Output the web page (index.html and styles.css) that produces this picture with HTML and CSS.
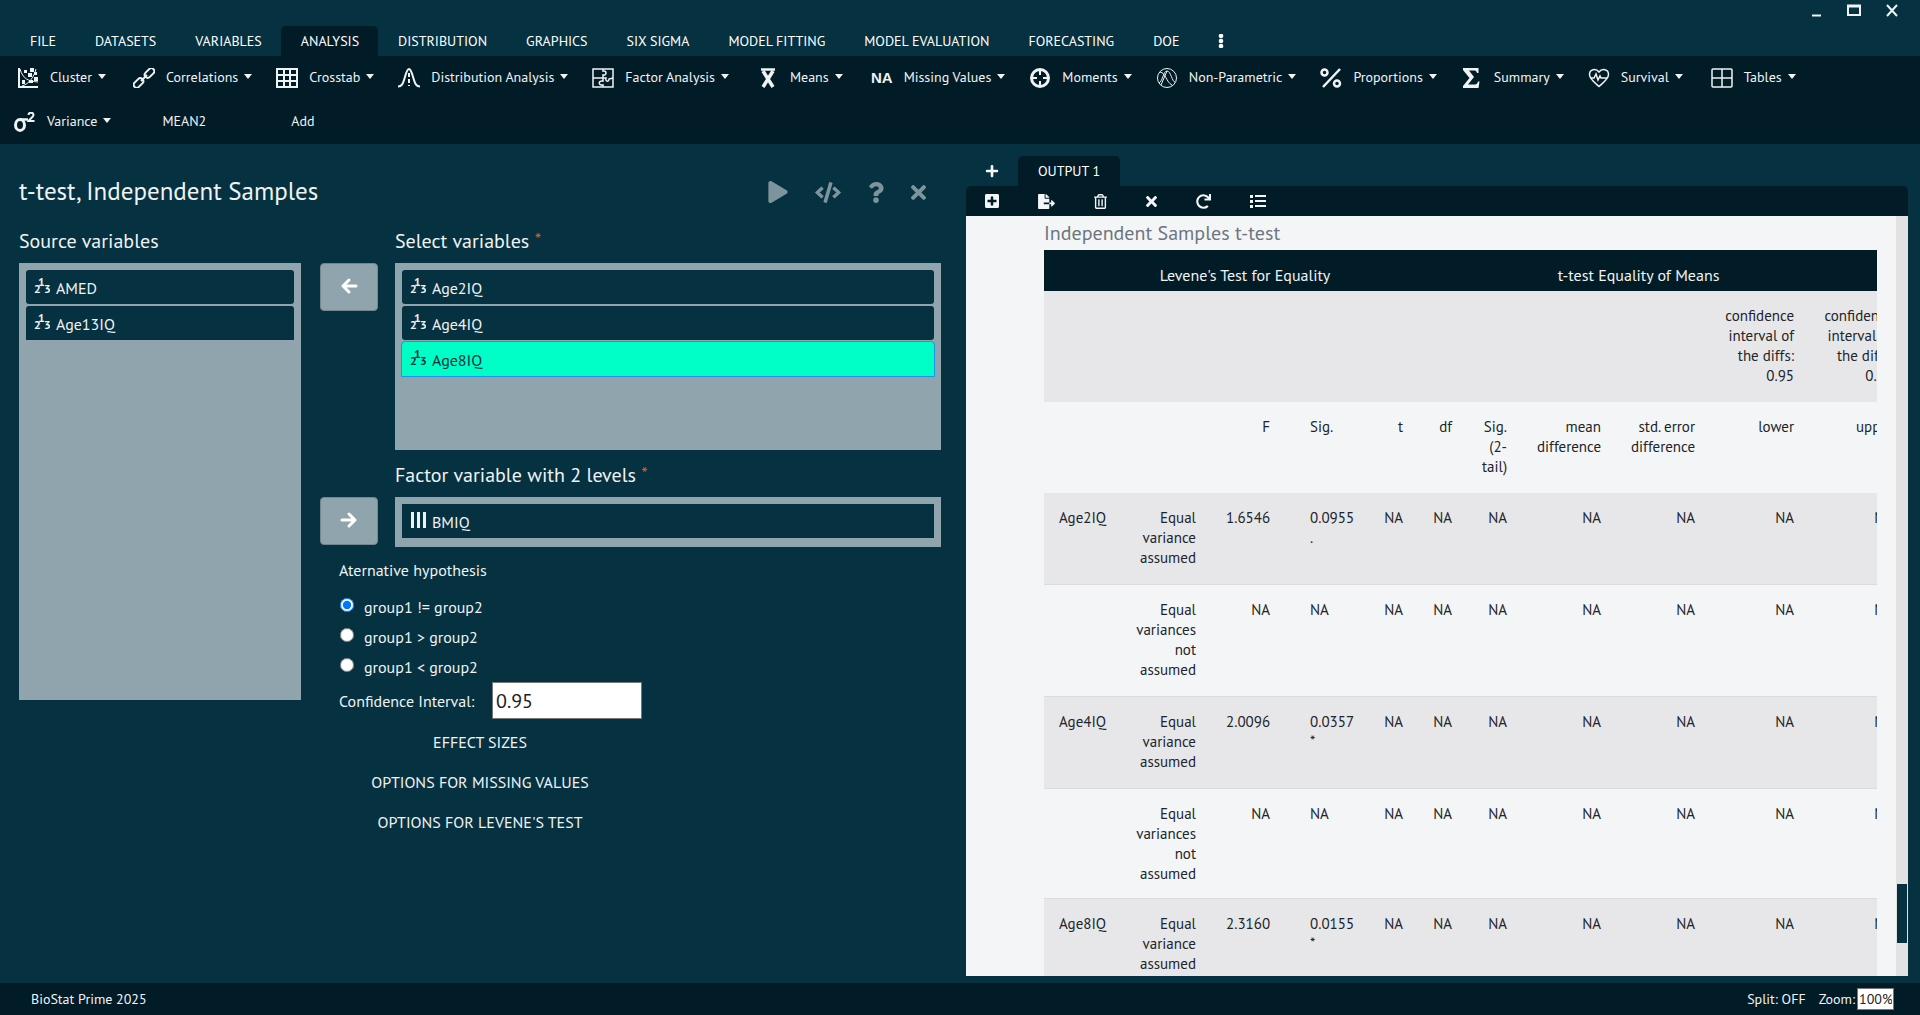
FILE: index.html
```html
<!DOCTYPE html>
<html lang="en">
<head>
<meta charset="utf-8">
<title>BioStat Prime 2025</title>
<link rel="stylesheet" href="styles.css">
</head>
<body>
<svg class="defs" aria-hidden="true">
  <symbol id="numeric" viewBox="0 0 16 18"><text x="0" y="16">2</text><text x="4" y="9">1</text><text x="10" y="16">3</text></symbol>
  <symbol id="times" viewBox="0 80 352 352"><path d="M242.72 256l100.07-100.07c12.28-12.28 12.28-32.19 0-44.48l-22.24-22.24c-12.28-12.28-32.19-12.28-44.48 0L176 189.28 75.93 89.21c-12.28-12.28-32.19-12.28-44.48 0L9.21 111.45c-12.28 12.28-12.28 32.19 0 44.48L109.28 256 9.21 356.07c-12.28 12.28-12.28 32.19 0 44.48l22.24 22.24c12.28 12.28 32.2 12.28 44.48 0L176 322.72l100.07 100.07c12.28 12.28 32.2 12.28 44.48 0l22.24-22.24c12.28-12.28 12.28-32.19 0-44.48L242.72 256z"/></symbol>
</svg>

<header>
  <div class="window-bar">
    <button class="window-btn" aria-label="Minimize"><svg width="14" height="14" viewBox="0 0 14 14"><path d="M3 12.500h9" stroke="currentColor" stroke-width="2"/></svg></button>
    <button class="window-btn" aria-label="Maximize"><svg width="14" height="14" viewBox="0 0 14 14"><path d="M1 3h12v9H1z" fill="none" stroke="currentColor" stroke-width="2"/><path d="M0 3h14" stroke="currentColor" stroke-width="3"/></svg></button>
    <button class="window-btn" aria-label="Close"><svg width="14" height="14" viewBox="0 0 14 14"><path d="M2 2l10 11M12 2L2 13" stroke="currentColor" stroke-width="2"/></svg></button>
  </div>
  <nav class="menu">
    <a href="#">FILE</a><a href="#">DATASETS</a><a href="#">VARIABLES</a><a href="#" class="active">ANALYSIS</a><a href="#">DISTRIBUTION</a><a href="#">GRAPHICS</a><a href="#">SIX SIGMA</a><a href="#">MODEL FITTING</a><a href="#">MODEL EVALUATION</a><a href="#">FORECASTING</a><a href="#">DOE</a><a href="#" aria-label="More"><svg width="6" height="14" viewBox="0 0 6 14" fill="currentColor"><circle cx="3" cy="2" r="2.300"/><circle cx="3" cy="7" r="2.300"/><circle cx="3" cy="12" r="2.300"/></svg></a>
  </nav>
  <div class="ribbon">
    <button class="tool indent"><svg class="tool-icon" viewBox="0 0 22 20"><path d="M2 0v19h19" fill="none" stroke="currentColor" stroke-width="2"/><path d="M3 1c3 10 8 12 18 13M5 18C12 16 17 9 19 1" fill="none" stroke="currentColor"/><g fill="currentColor"><path d="M7 2h3v3H7zM13 0h4v4h-4zM11 5h4v4h-4zM17 4h3v3h-3zM17 9h4v4h-4zM5 12h3v4H5zM12 12h4v3h-4z"/></g></svg><span>Cluster</span></button>
    <button class="tool indent"><svg class="tool-icon" viewBox="0 0 22 20" fill="none" stroke="currentColor" stroke-width="2"><rect x="11" y="2" width="11" height="6" rx="3" transform="rotate(-45 16.500 5)"/><rect x="0" y="12" width="11" height="6" rx="3" transform="rotate(-45 5.500 15)"/><path d="M8 13l6-6"/></svg><span>Correlations</span></button>
    <button class="tool"><svg class="tool-icon" viewBox="0 0 22 20" fill="none" stroke="currentColor" stroke-width="2"><path d="M1 1h20v18H1zM8 1v18M14 1v18M1 7h20M1 13h20"/></svg><span>Crosstab</span></button>
    <button class="tool"><svg class="tool-icon" viewBox="0 0 22 20" fill="none" stroke="currentColor" stroke-width="2"><path d="M0 18.500c4 0 5-3 6.500-8S9 1 11 1s3 4.500 4.500 9.500 2.500 8 6.500 8"/><path d="M11 5v13" stroke-dasharray="4 2"/></svg><span>Distribution Analysis</span></button>
    <button class="tool"><svg class="tool-icon" viewBox="0 0 22 20" fill="none" stroke="currentColor" stroke-width="1.500"><path d="M1 1h20v18H1z"/><path d="M11 1v2c4-1 4 5 0 4v3M1 10h13c-1 4 3 4 3 1l4-1M11 10v3c-5-1-5 5 0 4v2"/></svg><span>Factor Analysis</span></button>
    <button class="tool"><svg class="tool-icon wide" viewBox="0 0 22 20" fill="none" stroke="currentColor"><path d="M4 1.500h14" stroke-width="2.500"/><path d="M6 3l10 16M16 3L6 19" stroke-width="3.500"/></svg><span>Means</span></button>
    <button class="tool"><svg class="tool-icon wide" viewBox="0 0 22 20" fill="currentColor"><text class="na" x="0" y="15">NA</text></svg><span>Missing Values</span></button>
    <button class="tool"><svg class="tool-icon" viewBox="0 0 22 20" fill="none" stroke="currentColor" stroke-width="3"><circle cx="11" cy="10" r="8.500"/><path d="M11 1v6M11 13v6M2 10h6M14 10h6" stroke-width="2"/></svg><span>Moments</span></button>
    <button class="tool"><svg class="tool-icon" viewBox="0 0 22 20" fill="none" stroke="currentColor"><circle cx="11" cy="10" r="9.500"/><path d="M3 15C7 13 7 3 11 3s5 11 8 11M4 4c6 1 6 10 12 13M5 17L11 3"/></svg><span>Non-Parametric</span></button>
    <button class="tool"><svg class="tool-icon" viewBox="0 0 22 20" fill="none" stroke="currentColor" stroke-width="2.500"><circle cx="4.500" cy="4.500" r="3"/><circle cx="17" cy="15.500" r="3"/><path d="M20 1L3 19"/></svg><span>Proportions</span></button>
    <button class="tool"><svg class="tool-icon" viewBox="0 0 22 20" fill="currentColor"><path d="M2 0h15.500v5h-1.500c-.5-2-1.500-2.500-3-2.500H8l5 6.500-6 7.500h7c1.500 0 2.500-1 3-3h1.500L17.500 20H2v-2l6.500-8L2 2z"/></svg><span>Summary</span></button>
    <button class="tool"><svg class="tool-icon" viewBox="0 0 22 20" fill="none" stroke="currentColor" stroke-width="1.500"><path d="M11 18.500C7 15 1.500 11 1.500 6.500 1.500 1 8 0 11 4c3-4 9.500-3 9.500 2.500 0 4.500-5.500 8.500-9.500 12z"/><path d="M3 10h3l2-4 2 6 2-4 1 2h6"/></svg><span>Survival</span></button>
    <button class="tool"><svg class="tool-icon wide" viewBox="0 0 22 20" fill="none" stroke="currentColor" stroke-width="1.500"><rect x="1" y="1" width="20" height="18" rx="1"/><path d="M11 1v18M1 10h20"/></svg><span>Tables</span></button>
    <button class="tool"><svg class="tool-icon" viewBox="0 0 22 20" fill="none" stroke="currentColor"><ellipse cx="6" cy="13" rx="4.500" ry="5.500" stroke-width="3"/><path d="M6 7.500h8" stroke-width="2.500"/><path d="M14.500 3c0-3 5-3 5 0 0 2-3 3-5 6h6" stroke-width="2"/></svg><span>Variance</span></button>
    <button class="tool plain"><b>MEAN2</b></button>
    <button class="tool plain"><b>Add</b></button>
  </div>
</header>

<main>
  <section class="dialog">
    <div class="dialog-head">
      <h1>t-test, Independent Samples</h1>
      <div class="dialog-actions">
        <button aria-label="Run"><svg width="20" height="22" viewBox="0 0 448 512"><path d="M424.400 214.700L72.400 6.600C43.800-10.300 0 6.100 0 47.900V464c0 37.500 40.700 60.100 72.400 41.300l352-208c31.400-18.500 31.500-64.100 0-82.600z"/></svg></button>
        <button aria-label="Show code"><svg width="26" height="21" viewBox="0 0 640 512"><path d="M278.900 511.500l-61-17.700c-6.400-1.800-10-8.500-8.200-14.900L346.200 8.700c1.800-6.400 8.500-10 14.900-8.200l61 17.700c6.400 1.800 10 8.500 8.200 14.900L293.800 503.300c-1.900 6.400-8.500 10.100-14.900 8.200zm-114-112.200l43.500-46.400c4.600-4.900 4.300-12.700-.8-17.200L117 256l90.600-79.700c5.100-4.500 5.500-12.300.8-17.200l-43.500-46.400c-4.500-4.800-12.100-5.100-17-.5L3.800 247.200c-5.100 4.700-5.100 12.800 0 17.500l144.100 135.100c4.900 4.600 12.500 4.400 17-.5zm327.200.6l144.100-135.100c5.100-4.700 5.100-12.800 0-17.500L492.100 112.100c-4.800-4.500-12.400-4.300-17 .5L431.600 159c-4.600 4.900-4.300 12.700.8 17.200L523 256l-90.600 79.700c-5.100 4.500-5.500 12.300-.8 17.200l43.500 46.400c4.500 4.900 12.100 5.100 17 .6z"/></svg></button>
        <button aria-label="Help"><svg width="16" height="21" viewBox="0 0 384 512"><path d="M202.021 0C122.202 0 70.503 32.703 29.914 91.026c-7.363 10.580-5.093 25.086 5.178 32.874l43.138 32.709c10.373 7.865 25.132 6.026 33.253-4.148 25.049-31.381 43.630-49.449 82.757-49.449 30.764 0 68.816 19.799 68.816 49.631 0 22.552-18.617 34.134-48.993 51.164-35.423 19.860-82.299 44.576-82.299 106.405V320c0 13.255 10.745 24 24 24h72.471c13.255 0 24-10.745 24-24v-5.773c0-42.860 125.268-44.645 125.268-160.627C377.504 66.256 286.902 0 202.021 0zM192 373.459c-38.196 0-69.271 31.075-69.271 69.271 0 38.195 31.075 69.270 69.271 69.270s69.271-31.075 69.271-69.271-31.075-69.270-69.271-69.270z"/></svg></button>
        <button aria-label="Close dialog"><svg width="15" height="15"><use href="#times"/></svg></button>
      </div>
    </div>

    <div class="dialog-body">
      <div class="source">
        <h2>Source variables</h2>
        <ul class="var-list source-list">
          <li><svg class="type"><use href="#numeric"/></svg>AMED</li>
          <li><svg class="type"><use href="#numeric"/></svg>Age13IQ</li>
        </ul>
      </div>

      <div class="targets">
        <div class="target">
          <h2>Select variables <sup>*</sup></h2>
          <button class="move" aria-label="Remove from selected"><svg width="18" height="18" viewBox="0 0 18 18"><path d="M16 9H3M9 3L3 9l6 6"/></svg></button>
          <ul class="var-list select-list">
            <li><svg class="type"><use href="#numeric"/></svg>Age2IQ</li>
            <li><svg class="type"><use href="#numeric"/></svg>Age4IQ</li>
            <li class="selected"><svg class="type"><use href="#numeric"/></svg>Age8IQ</li>
          </ul>
        </div>
        <div class="target">
          <h2>Factor variable with 2 levels <sup>*</sup></h2>
          <button class="move" aria-label="Add factor variable"><svg width="18" height="18" viewBox="0 0 18 18"><path d="M2 9h13M9 3l6 6-6 6"/></svg></button>
          <ul class="var-list single-list">
            <li><svg class="type" viewBox="0 0 16 18"><path d="M1 1h3v16H1zM7 1h3v16H7zM13 1h3v16h-3z" fill="currentColor"/></svg>BMIQ</li>
          </ul>
        </div>

        <div class="options">
          <fieldset>
            <legend>Aternative hypothesis</legend>
            <label class="choice"><input type="radio" name="alt" checked>group1 != group2</label>
            <label class="choice"><input type="radio" name="alt">group1 &gt; group2</label>
            <label class="choice"><input type="radio" name="alt">group1 &lt; group2</label>
          </fieldset>
          <div class="confidence"><label for="conf">Confidence Interval:</label><input id="conf" type="text" value="0.95"></div>
          <button class="section">EFFECT SIZES</button>
          <button class="section">OPTIONS FOR MISSING VALUES</button>
          <button class="section">OPTIONS FOR LEVENE'S TEST</button>
        </div>
      </div>
    </div>
  </section>

  <section class="output">
    <div class="output-tabs">
      <button class="add-tab" aria-label="New output"><svg width="14" height="14" viewBox="0 0 448 512"><path d="M416 208H272V64c0-17.670-14.330-32-32-32h-32c-17.670 0-32 14.330-32 32v144H32c-17.670 0-32 14.330-32 32v32c0 17.670 14.330 32 32 32h144v144c0 17.670 14.330 32 32 32h32c17.670 0 32-14.330 32-32V304h144c17.670 0 32-14.330 32-32v-32c0-17.670-14.330-32-32-32z"/></svg></button>
      <button class="output-tab">OUTPUT 1</button>
    </div>
    <div class="output-tools">
      <button aria-label="Add"><svg width="14" height="14" viewBox="0 32 448 448"><path d="M400 32H48C21.500 32 0 53.500 0 80v352c0 26.500 21.500 48 48 48h352c26.500 0 48-21.500 48-48V80c0-26.500-21.500-48-48-48zm-32 252c0 6.600-5.400 12-12 12h-92v92c0 6.600-5.400 12-12 12h-56c-6.600 0-12-5.400-12-12v-92H92c-6.600 0-12-5.400-12-12v-56c0-6.600 5.400-12 12-12h92v-92c0-6.600 5.400-12 12-12h56c6.600 0 12 5.400 12 12v92h92c6.600 0 12 5.400 12 12v56z"/></svg></button>
      <button aria-label="Export"><svg width="17" height="15" viewBox="0 0 576 512"><path d="M384 121.900c0-6.300-2.500-12.400-7-16.900L279.100 7c-4.500-4.500-10.600-7-17-7H256v128h128zM571 308l-95.700-96.400c-10.100-10.100-27.400-3-27.400 11.300V288h-64v64h64v65.200c0 14.300 17.300 21.400 27.400 11.300L571 332c6.600-6.600 6.600-17.400 0-24zm-379 28v-32c0-8.800 7.200-16 16-16h176V160H248c-13.200 0-24-10.800-24-24V0H24C10.700 0 0 10.700 0 24v464c0 13.300 10.700 24 24 24h336c13.300 0 24-10.700 24-24V352H208c-8.800 0-16-7.200-16-16z"/></svg></button>
      <button aria-label="Delete"><svg width="13" height="15" viewBox="0 0 448 512"><path d="M268 416h24a12 12 0 0 0 12-12V188a12 12 0 0 0-12-12h-24a12 12 0 0 0-12 12v216a12 12 0 0 0 12 12zM432 80h-82.410l-34-56.700A48 48 0 0 0 274.410 0H173.590a48 48 0 0 0-41.160 23.300L98.410 80H16A16 16 0 0 0 0 96v16a16 16 0 0 0 16 16h16v336a48 48 0 0 0 48 48h288a48 48 0 0 0 48-48V128h16a16 16 0 0 0 16-16V96a16 16 0 0 0-16-16zM171.840 50.910A6 6 0 0 1 177 48h94a6 6 0 0 1 5.150 2.910L293.610 80H154.390zM368 464H80V128h288zm-212-48h24a12 12 0 0 0 12-12V188a12 12 0 0 0-12-12h-24a12 12 0 0 0-12 12v216a12 12 0 0 0 12 12z"/></svg></button>
      <button aria-label="Clear"><svg width="11" height="11"><use href="#times"/></svg></button>
      <button aria-label="Refresh"><svg width="15" height="15" viewBox="0 0 512 512"><path d="M500.330 0h-47.410a12 12 0 0 0-12 12.570l4 82.760A247.420 247.420 0 0 0 256 8C119.340 8 7.900 119.530 8 256.190 8.100 393.070 119.100 504 256 504a247.100 247.100 0 0 0 166.180-63.910 12 12 0 0 0 .48-17.430l-34-34a12 12 0 0 0-16.380-.55A176 176 0 1 1 402.100 157.800l-101.530-4.870a12 12 0 0 0-12.570 12v47.410a12 12 0 0 0 12 12h200.330a12 12 0 0 0 12-12V12a12 12 0 0 0-12-12z"/></svg></button>
      <button aria-label="List"><svg width="16" height="14" viewBox="0 0 16 14"><path d="M0 1h3v3H0zM0 6h3v3H0zM0 11h3v3H0zM5 1h11v2H5zM5 6h11v2H5zM5 11h11v2H5z"/></svg></button>
    </div>
    <div class="output-view">
      <div class="report">
        <h3>Independent Samples t-test</h3>
        <table>
          <colgroup><col class="c-var"><col class="c-kind"><col class="c-f"><col class="c-sig"><col class="c-t"><col class="c-t"><col class="c-tail"><col class="c-diff"><col class="c-diff"><col class="c-ci"><col class="c-ci"></colgroup>
          <thead>
            <tr><th></th><th colspan="3">Levene's Test for Equality</th><th colspan="7">t-test Equality of Means</th></tr>
          </thead>
          <tbody>
            <tr class="shade"><td></td><td></td><td></td><td></td><td></td><td></td><td></td><td></td><td></td><td>confidence interval of the diffs: 0.95</td><td>confidence interval of the diffs: 0.95</td></tr>
            <tr><td></td><td></td><td>F</td><td>Sig.</td><td>t</td><td>df</td><td>Sig. (2-tail)</td><td>mean difference</td><td>std. error difference</td><td>lower</td><td>upper</td></tr>
            <tr class="shade ruled"><td>Age2IQ</td><td>Equal variance assumed</td><td>1.6546</td><td>0.0955 .</td><td>NA</td><td>NA</td><td>NA</td><td>NA</td><td>NA</td><td>NA</td><td>NA</td></tr>
            <tr class="ruled"><td></td><td>Equal variances not assumed</td><td>NA</td><td>NA</td><td>NA</td><td>NA</td><td>NA</td><td>NA</td><td>NA</td><td>NA</td><td>NA</td></tr>
            <tr class="shade ruled"><td>Age4IQ</td><td>Equal variance assumed</td><td>2.0096</td><td>0.0357 *</td><td>NA</td><td>NA</td><td>NA</td><td>NA</td><td>NA</td><td>NA</td><td>NA</td></tr>
            <tr class="ruled last"><td></td><td>Equal variances not assumed</td><td>NA</td><td>NA</td><td>NA</td><td>NA</td><td>NA</td><td>NA</td><td>NA</td><td>NA</td><td>NA</td></tr>
            <tr class="shade ruled"><td>Age8IQ</td><td>Equal variance assumed</td><td>2.3160</td><td>0.0155 *</td><td>NA</td><td>NA</td><td>NA</td><td>NA</td><td>NA</td><td>NA</td><td>NA</td></tr>
          </tbody>
        </table>
      </div>
      <div class="scrollbar"><div class="thumb"></div></div>
    </div>
  </section>
</main>

<footer>
  <span class="product">BioStat Prime 2025</span>
  <span>Split: OFF</span>
  <span class="zoom"><label for="zoom">Zoom:</label><input id="zoom" type="text" value="100%"></span>
</footer>
</body>
</html>
```
FILE: styles.css
```css
:root {
  --bg: #063140;
  --dark: #021c27;
  --panel: #90a4ad;
  --text: #f0f3f4;
}
* { box-sizing: border-box; }
body {
  margin: 0;
  height: 100vh;
  display: flex;
  flex-direction: column;
  background: var(--bg);
  color: var(--text);
  font: 14px/20px "PT Sans", Lato, sans-serif;
}
button, input { font: inherit; color: inherit; }
button { background: none; border: 0; padding: 0; cursor: pointer; }
button svg { display: block; }
h1, h2, h3, ul { margin: 0; padding: 0; font-weight: normal; }
.defs { display: none; }

/* Window controls, menu and ribbon */
.window-bar {
  display: flex;
  justify-content: flex-end;
  gap: 24px;
  height: 26px;
  padding: 3px 21px 0 0;
}
.window-btn { height: 14px; }
.menu { display: flex; height: 30px; padding-left: 10px; }
.menu a {
  display: flex;
  align-items: center;
  padding: 0 19px 0 20px;
  color: #fff;
  text-decoration: none;
  border-radius: 5px 5px 0 0;
}
.menu a.active { background: var(--dark); }
.ribbon {
  display: flex;
  flex-wrap: wrap;
  column-gap: 24px;
  min-height: 88px;
  padding: 0 14px;
  background: var(--dark);
}
.tool {
  display: flex;
  align-items: center;
  height: 44px;
  white-space: nowrap;
}
.tool span, .tool b { margin-bottom: 2px; font-weight: normal; }
.tool-icon { width: 22px; height: 20px; margin-right: 11px; }
.tool-icon.wide { margin-left: 4px; }
.tool.indent { margin-left: 3px; }
.tool span::after {
  content: "";
  display: inline-block;
  margin-left: 6px;
  vertical-align: 3px;
  border: 5px solid transparent;
  border-width: 5px 4px 0;
  border-top-color: currentColor;
}
.tool.plain { padding: 0 34px 0 27px; }
.na { font: bold 15px "Liberation Sans", sans-serif; }

main { flex: 1; min-height: 0; display: grid; grid-template-columns: 1fr 1fr; }

/* Dialog */
.dialog { padding: 31px 19px 0; }
.dialog-head {
  display: flex;
  justify-content: space-between;
  align-items: center;
  height: 32px;
  margin-bottom: 19px;
}
h1 { font-size: 25px; line-height: 32px; }
.dialog-actions { display: flex; align-items: center; gap: 27px; padding: 2px 15px 0 0; }
.dialog-actions svg { fill: #7e949d; }
h2 { font-size: 20px; line-height: 30px; margin-bottom: 7px; }
sup { color: #f4511e; font-size: 18px; line-height: 0; vertical-align: 2px; }
.dialog-body { display: grid; grid-template-columns: 282px 1fr; gap: 19px; }
.var-list {
  list-style: none;
  padding: 7px 7px 9px;
  background: var(--panel);
  display: flex;
  flex-direction: column;
  gap: 2px;
}
.source-list { height: 437px; }
.select-list { height: 187px; }
.var-list li {
  display: flex;
  align-items: center;
  gap: 6px;
  height: 34px;
  padding: 2px 8px 0;
  background: var(--bg);
  border-radius: 3px;
  font-size: 16px;
}
.var-list li:last-child { border-radius: 3px 3px 0 0; }
.single-list li:last-child { border-radius: 0; }
.var-list li.selected { background: #00ffc6; color: #053140; outline: 1px solid #2196e8; }
.type { width: 16px; height: 18px; margin-bottom: 4px; fill: currentColor; overflow: visible; font: bold 12px "PT Sans", Lato, sans-serif; }
.target {
  display: grid;
  grid-template-columns: 58px 1fr;
  column-gap: 17px;
  align-items: start;
  margin-bottom: 10px;
}
.target h2 { grid-column: 2; }
.move {
  display: flex;
  align-items: center;
  justify-content: center;
  height: 48px;
  padding-bottom: 2px;
  background: var(--panel);
  border: 1px solid #77868e;
  border-radius: 4px;
}
.move path { fill: none; stroke: #fff; stroke-width: 3; stroke-linecap: round; stroke-linejoin: round; }
.options { margin-left: 19px; width: 282px; font-size: 16px; }
fieldset { border: 0; margin: 0; padding: 0; }
legend { padding: 1px 0 10px; line-height: 24px; }
.choice { display: flex; align-items: center; height: 30px; }
.choice input { width: 14px; height: 14px; margin: 0 10px 4px 1px; }
.confidence { display: flex; align-items: center; margin-right: -21px; }
.confidence input {
  width: 150px;
  height: 37px;
  margin-left: auto;
  padding: 0 3px;
  background: #fff;
  border: 1px solid #767676;
  color: #222;
  font-size: 20px;
}
.section { display: block; width: 100%; height: 40px; }
.confidence + .section { margin-top: 3px; }

/* Output */
.output { display: flex; flex-direction: column; min-width: 0; min-height: 0; padding: 12px 12px 7px 6px; }
.output-tabs { display: flex; height: 30px; }
.add-tab { width: 52px; display: flex; justify-content: center; align-items: center; }
.output-tab { padding: 0 20px; background: var(--dark); border-radius: 5px 5px 0 0; color: #fff; }
.output svg { fill: #f4f6f7; }
.output-tools {
  display: flex;
  align-items: center;
  gap: 39px;
  height: 30px;
  padding-left: 19px;
  background: var(--dark);
  border-radius: 5px 5px 0 0;
}
.output-view { flex: 1; min-height: 0; display: flex; background: #f4f5f7; }
.report { flex: 1; min-width: 0; overflow: hidden; margin: 0 19px 0 78px; color: #212529; }
h3 { height: 34px; font-size: 20px; line-height: 34px; color: #6c757d; }
table { width: 864px; table-layout: fixed; border-collapse: separate; border-spacing: 0; font-size: 15px; }
.c-var { width: 77px; }
.c-kind { width: 90px; }
.c-f { width: 74px; }
.c-sig { width: 84px; }
.c-t { width: 49px; }
.c-tail { width: 55px; }
.c-diff { width: 94px; }
.c-ci { width: 99px; }
th {
  height: 41px;
  padding: 8px 0 0;
  background: var(--dark);
  color: var(--text);
  font-size: 16px;
  font-weight: normal;
}
td { padding: 15px 15px 16px; text-align: right; vertical-align: top; }
td:first-child { text-align: left; padding-right: 0; }
td:nth-child(4) { text-align: left; padding-left: 25px; }
.shade td { background: #e7e7e9; }
.ruled td { border-bottom: 1px solid #dadbdd; }
.last td { padding-bottom: 14px; }
.scrollbar {
  display: flex;
  flex-direction: column;
  justify-content: flex-end;
  width: 12px;
  padding: 0 1px 33px;
  background: #e2e2e2;
}
.thumb { height: 59px; background: var(--bg); }

footer {
  display: flex;
  align-items: center;
  gap: 13px;
  height: 32px;
  padding: 0 26px 0 31px;
  background: var(--dark);
}
.product { margin-right: auto; }
.zoom { display: flex; align-items: center; gap: 2px; }
.zoom input {
  width: 37px;
  height: 22px;
  padding: 0 1px;
  background: #fff;
  border: 1px solid #767676;
  color: #222;
}
```
